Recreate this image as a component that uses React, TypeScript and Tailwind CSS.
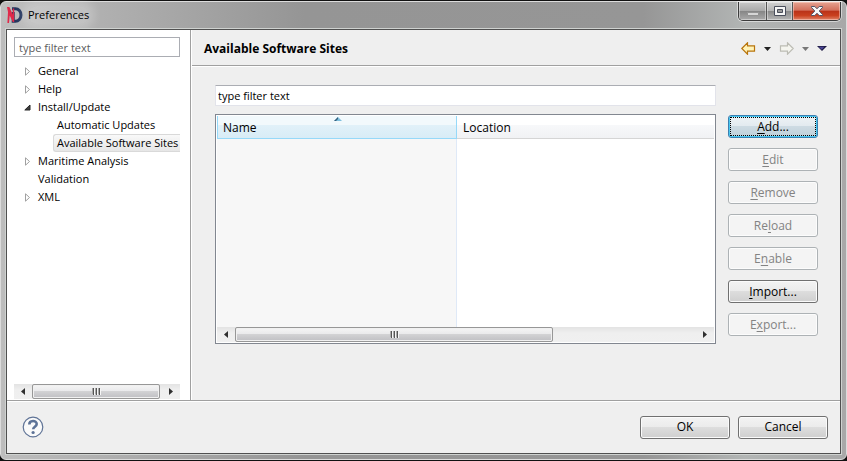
import type { ReactNode } from "react";

function Mnemonic({ text, index }: { text: string; index: number }) {
  if (index < 0) return <>{text}</>;
  return (
    <span>
      {text.slice(0, index)}
      <span className="underline underline-offset-2">{text[index]}</span>
      {text.slice(index + 1)}
    </span>
  );
}

type ButtonState = "normal" | "focused" | "disabled";

const buttonStyles: Record<ButtonState, string> = {
  normal:
    "border-[#707070] text-black bg-[linear-gradient(#f3f3f3_0%,#ebebeb_49%,#dddddd_50%,#cfcfcf_100%)] shadow-[inset_0_0_0_1px_#fbfbfb]",
  focused:
    "border-[#3c7fb1] text-black bg-[linear-gradient(#eef3f6_0%,#e2eaef_49%,#cddbe3_50%,#bfd0da_100%)] shadow-[inset_0_0_0_1px_#48c8f0]",
  disabled: "border-[#adb2b5] text-[#838383] bg-[#f4f4f4] shadow-[inset_0_0_0_1px_#fcfcfc]",
};

function PushButton({ label, mnemonic = -1, state = "normal" }: { label: string; mnemonic?: number; state?: ButtonState }) {
  return (
    <button
      type="button"
      disabled={state === "disabled"}
      className={`flex h-[23px] w-[90px] items-center rounded-[3px] border p-px ${buttonStyles[state]}`}
    >
      <span
        className={`flex h-full w-full items-center justify-center ${
          state === "focused" ? "border border-dotted border-black" : ""
        }`}
      >
        <Mnemonic text={label} index={mnemonic} />
      </span>
    </button>
  );
}

function ScrollBar({ thumb, label }: { thumb: string; label: string }) {
  return (
    <div role="group" aria-label={label} className="flex h-[15px] shrink-0 bg-[linear-gradient(#e3e3e3,#efefef_40%,#f0f0f0)]">
      <button type="button" aria-label="Scroll left" className="flex w-[18px] shrink-0 items-center justify-center">
        <svg width="4" height="7" viewBox="0 0 4 7">
          <path d="M4 0v7L0 3.5z" fill="#303030" />
        </svg>
      </button>
      <div className="flex min-w-0 flex-1">
        <div
          className={`flex items-center justify-center rounded-[2px] border border-[#979797] bg-[linear-gradient(#f5f5f5_0%,#e9e9eb_49%,#d2d2d4_50%,#bfbfc3_100%)] shadow-[inset_0_0_0_1px_#f1f1f1] ${thumb}`}
        >
          <svg width="9" height="7" viewBox="0 0 9 7" shapeRendering="crispEdges">
            <path d="M1 0h1v7H1zM4 0h1v7H4zM7 0h1v7H7z" fill="#555" />
            <path d="M2 1h1v6H2zM5 1h1v6H5zM8 1h1v6H8z" fill="#f6f6f6" />
            <path d="M0 0h1v6H0zM3 0h1v6H3zM6 0h1v6H6z" fill="#aaa" />
          </svg>
        </div>
      </div>
      <button type="button" aria-label="Scroll right" className="flex w-[18px] shrink-0 items-center justify-center">
        <svg width="4" height="7" viewBox="0 0 4 7">
          <path d="M0 0v7l4-3.5z" fill="#303030" />
        </svg>
      </button>
    </div>
  );
}

function Twisty({ open }: { open: boolean }) {
  return (
    <svg width="8" height="9" viewBox="0 0 8 9">
      {open ? (
        <path d="M6 2v5H.8z" fill="#404040" stroke="#262626" strokeWidth="1" strokeLinejoin="round" />
      ) : (
        <path d="M1.5.8v7.4L5.5 4.5z" fill="#fff" stroke="#a0a0a0" strokeWidth="1" />
      )}
    </svg>
  );
}

type Item = { label: string; kind: "closed" | "open" | "leaf"; level?: number; selected?: boolean };

const items: Item[] = [
  { label: "General", kind: "closed" },
  { label: "Help", kind: "closed" },
  { label: "Install/Update", kind: "open" },
  { label: "Automatic Updates", kind: "leaf", level: 2 },
  { label: "Available Software Sites", kind: "leaf", level: 2, selected: true },
  { label: "Maritime Analysis", kind: "closed" },
  { label: "Validation", kind: "leaf" },
  { label: "XML", kind: "closed" },
];

function TreeRow({ item }: { item: Item }) {
  return (
    <li
      role="treeitem"
      aria-selected={!!item.selected}
      aria-expanded={item.kind === "leaf" ? undefined : item.kind === "open"}
      className={`flex h-[18px] items-center whitespace-nowrap ${item.level === 2 ? "pl-[39px]" : "pl-[10px]"}`}
    >
      {item.level !== 2 && (
        <span className="flex w-[14px] shrink-0 items-center">{item.kind !== "leaf" && <Twisty open={item.kind === "open"} />}</span>
      )}
      <span
        className={
          item.selected
            ? "flex h-[18px] flex-1 items-center rounded-l-[3px] border border-r-0 border-[#d9d9d9] bg-[linear-gradient(#f9f9f9,#e6e6e6)] pl-[3px]"
            : item.level === 2
              ? "pl-1"
              : ""
        }
      >
        {item.label}
      </span>
    </li>
  );
}

function AppLogo() {
  return (
    <svg width="16" height="16" viewBox="0 0 16 16" aria-hidden="true">
      <path d="M5 1.700h3.500a5.500 6.300 0 0 1 0 12.600H6.200V5" fill="none" stroke="#24365f" strokeWidth="3" />
      <path d="M0 0h2.400l3.300 7.500V1.500h1.500V15H5.800L2.700 8.500 2 16H.4L1 5z" fill="#e0294a" />
    </svg>
  );
}

function Caption({ label, className, children }: { label: string; className: string; children: ReactNode }) {
  return (
    <button type="button" aria-label={label} className={`flex h-[18px] items-center justify-center ${className}`}>
      {children}
    </button>
  );
}

function TitleBar() {
  return (
    <header className="flex h-[29px] shrink-0 items-start justify-between">
      <div className="flex items-center gap-[5px] pt-1 pl-px">
        <AppLogo />
        <h1 className="rounded-full bg-white/20 text-[11px] leading-[18px] shadow-[0_0_8px_6px_rgba(255,255,255,0.2)]">Preferences</h1>
      </div>
      <div className="flex overflow-hidden rounded-b-[5px] border border-t-0 border-[#3c3c3c] shadow-[0_0_0_1px_rgba(255,255,255,0.5)]">
        <Caption label="Minimize" className="w-[28px] border-r border-[#555] bg-[linear-gradient(#c8c8c8,#aaa_48%,#858585_50%,#aaa)] shadow-[inset_0_0_0_1px_rgba(255,255,255,0.4)]">
          <svg width="12" height="12" viewBox="0 0 12 12">
            <path d="M.5 7.500h11v3H.5z" fill="#d6d6d6" stroke="#929292" />
          </svg>
        </Caption>
        <Caption label="Maximize" className="w-[26px] border-r border-[#555] bg-[linear-gradient(#d2d2d2,#b5b5b5_48%,#888_50%,#b5b5b5)] shadow-[inset_0_0_0_1px_rgba(255,255,255,0.4)]">
          <svg width="12" height="10" viewBox="0 0 12 10">
            <path d="M.5.5h11v9H.5z" fill="#f5f5f5" stroke="#4a4e5b" />
            <path d="M3.500 3.500h5v3h-5z" fill="#999" stroke="#4a4e5b" />
          </svg>
        </Caption>
        <Caption label="Close" className="w-[47px] bg-[linear-gradient(#e6a392,#d3705c_46%,#b93218_50%,#c9401f_75%,#e0856a)] shadow-[inset_0_0_0_1px_rgba(255,220,210,0.5)]">
          <svg width="12" height="10" viewBox="0 0 12 10">
            <path d="M.5.500h3.300L6 2.800 8.200.500h3.300v1L8.200 5l3.300 3.500v1H8.200L6 7.200 3.800 9.500H.5v-1L3.800 5 .5 1.500z" fill="#f7f7f7" stroke="#515567" />
          </svg>
        </Caption>
      </div>
    </header>
  );
}

function Chevron({ color }: { color: string }) {
  return (
    <svg width="7" height="4" viewBox="0 0 7 4">
      <path d="M0 0h7L3.500 4z" fill={color} />
    </svg>
  );
}

function Navigation() {
  const arrow = "M.8 6.500L6.500.8v3h7v5.400h-7v3z";
  return (
    <nav aria-label="History" className="flex items-center gap-2">
      <button type="button" aria-label="Back">
        <svg width="15" height="13" viewBox="0 0 15 13">
          <path d={arrow} fill="#fff3b8" stroke="#b8740c" strokeWidth="1.200" />
        </svg>
      </button>
      <button type="button" aria-label="Back history">
        <Chevron color="#222" />
      </button>
      <button type="button" aria-label="Forward" disabled>
        <svg width="15" height="13" viewBox="0 0 15 13">
          <path d={arrow} transform="translate(15 0) scale(-1 1)" fill="#f5f5ef" stroke="#bcbcb4" strokeWidth="1.200" />
        </svg>
      </button>
      <button type="button" aria-label="Forward history" disabled>
        <Chevron color="#777" />
      </button>
      <button type="button" aria-label="View menu">
        <svg width="10" height="5" viewBox="0 0 10 5">
          <path d="M0 0h10L5 5z" fill="#1c1940" />
          <path d="M1.500 .8h6L4.800 3.800z" fill="#4a4494" />
        </svg>
      </button>
    </nav>
  );
}

function SitesTable() {
  return (
    <div className="flex min-h-0 min-w-0 flex-1 flex-col border border-[#828790] bg-white p-px">
      <table className="h-full min-h-0 w-full flex-1 table-fixed border-separate border-spacing-0 text-left">
        <thead>
          <tr className="h-[23px]">
            <th
              scope="col"
              aria-sort="ascending"
              className="relative w-[240px] border-x border-b border-[#96d9f9] bg-[linear-gradient(#f2f9fc_0%,#f2f9fc_40%,#e1f1f9_41%,#d8ecf6_100%)] px-[5px] pt-0.5 pb-0 font-normal"
            >
              Name
              <svg className="absolute top-px left-[116px]" width="8" height="4" viewBox="0 0 8 4">
                <path d="M0 4l4-4 4 4z" fill="#7fc0de" />
                <path d="M0 4l4-4v2L2 4z" fill="#345f7c" />
              </svg>
            </th>
            <th
              scope="col"
              className="border-b border-[#d5d5d5] bg-[linear-gradient(#ffffff_0%,#ffffff_40%,#f7f8fa_41%,#f1f2f4_100%)] px-[6px] pt-0.5 pb-0 font-normal"
            >
              Location
            </th>
          </tr>
        </thead>
        <tbody>
          <tr>
            <td className="border-r border-[#dfe9f7] bg-[#f7f7f7]" />
            <td />
          </tr>
        </tbody>
      </table>
      <ScrollBar thumb="w-[69%]" label="Sites horizontal scroll" />
    </div>
  );
}

const actions: { label: string; mnemonic: number; state: ButtonState }[] = [
  { label: "Add...", mnemonic: 0, state: "focused" },
  { label: "Edit", mnemonic: 0, state: "disabled" },
  { label: "Remove", mnemonic: 0, state: "disabled" },
  { label: "Reload", mnemonic: 2, state: "disabled" },
  { label: "Enable", mnemonic: 1, state: "disabled" },
  { label: "Import...", mnemonic: 0, state: "normal" },
  { label: "Export...", mnemonic: 1, state: "disabled" },
];

export default function App() {
  return (
    <div className="h-screen bg-[#111] pt-px pb-px font-[Open_Sans,sans-serif] text-[12px] leading-4 text-black">
      <div className="flex h-full flex-col rounded-[6px] border border-[#dcdcdc] bg-[linear-gradient(90deg,#bdbdbd_0%,#a5a5a5_22%,#959595_36%,#969696_76%,#b2b5b4_88%,#a8a8a8_100%)] px-[5px] pb-[5px]">
        <TitleBar />
        <div className="-mt-0.5 flex min-h-0 flex-1 flex-col border border-[#505050] bg-[#efefef] shadow-[0_0_0_1px_#cfd2d0]">
          <div className="flex min-h-0 flex-1">
            <aside className="flex w-[184px] shrink-0 flex-col border-r border-[#a0a0a0] bg-white pt-[7px] pr-[10px] pb-px pl-[7px] text-[11px]">
              <input
                type="text"
                aria-label="Filter preferences"
                placeholder="type filter text"
                className="mb-[5px] h-5 w-full shrink-0 border border-[#abadb3] px-1 outline-none placeholder:text-[#5c5c5c]"
              />
              <ul role="tree" aria-label="Preference pages" className="min-h-0 flex-1 overflow-hidden">
                {items.map((item) => (
                  <TreeRow key={item.label} item={item} />
                ))}
              </ul>
              <ScrollBar thumb="w-[128px]" label="Tree horizontal scroll" />
            </aside>
            <main className="flex min-w-0 flex-1 flex-col border-l border-white">
              <div className="flex h-9 shrink-0 items-center justify-between border-b border-[#a0a0a0] pt-0.5 pr-[13px] pl-3">
                <h2 className="text-[12px] font-bold">Available Software Sites</h2>
                <Navigation />
              </div>
              <div className="flex min-h-0 flex-1 flex-col border-t border-white pt-[18px] pr-[22px] pb-[56px] pl-[23px]">
                <input
                  type="text"
                  aria-label="Filter sites"
                  defaultValue="type filter text"
                  className="mr-[102px] mb-2 h-[21px] shrink-0 rounded-[1px] border border-[#e2e3ea] border-t-[#abadb3] bg-white px-[2px] text-[11px] outline-none"
                />
                <div className="flex min-h-0 flex-1 gap-3">
                  <SitesTable />
                  <div className="flex flex-col gap-[10px] pt-px">
                    {actions.map((a) => (
                      <PushButton key={a.label} {...a} />
                    ))}
                  </div>
                </div>
              </div>
            </main>
          </div>
          <footer className="flex h-[53px] shrink-0 items-center justify-between border-t border-[#a0a0a0] pr-3 pl-[15px] shadow-[inset_0_1px_0_#fff]">
            <button type="button" aria-label="Help">
              <svg width="22" height="22" viewBox="0 0 22 22">
                <circle cx="11" cy="11" r="9.800" fill="#fafafa" stroke="#5f7396" strokeWidth="1.200" />
                <path d="M7.300 8.600C7.300 4 14.700 4 14.700 8c0 2.700-3.500 2.800-3.500 5.200" fill="none" stroke="#5d7397" strokeWidth="2.600" />
                <circle cx="11.100" cy="16.500" r="1.600" fill="#5d7397" />
              </svg>
            </button>
            <div className="flex gap-2">
              <PushButton label="OK" />
              <PushButton label="Cancel" />
            </div>
          </footer>
        </div>
      </div>
    </div>
  );
}
